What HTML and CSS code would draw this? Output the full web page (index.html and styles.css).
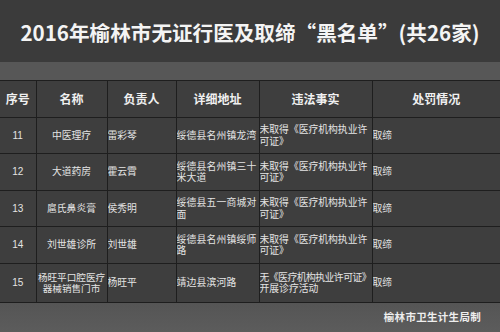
FILE: index.html
```html
<!DOCTYPE html>
<html lang="zh">
<head>
<meta charset="utf-8">
<link rel="stylesheet" href="styles.css">
</head>
<body>
<div class="page">
  <header class="title-bar">
    <h1 class="title">2016年榆林市无证行医及取缔“黑名单”(共26家)</h1>
  </header>
  <div class="band"></div>
  <table class="list">
    <colgroup>
      <col class="c1"><col class="c2"><col class="c3"><col class="c4"><col class="c5"><col class="c6">
    </colgroup>
    <thead>
      <tr class="h">
        <th>序号</th><th>名称</th><th>负责人</th><th>详细地址</th><th>违法事实</th><th>处罚情况</th>
      </tr>
    </thead>
    <tbody>
      <tr class="r1">
        <td class="num">11</td><td class="name">中医理疗</td><td>雷彩琴</td>
        <td class="addr">绥德县名州镇龙湾</td><td class="fact">未取得《医疗机构执业许<br>可证》</td><td>取缔</td>
      </tr>
      <tr class="r2">
        <td class="num">12</td><td class="name">大道药房</td><td>霍云霄</td>
        <td class="addr">绥德县名州镇三十<br>米大道</td><td class="fact">未取得《医疗机构执业许<br>可证》</td><td>取缔</td>
      </tr>
      <tr class="r3">
        <td class="num">13</td><td class="name">扈氏鼻炎膏</td><td>侯秀明</td>
        <td class="addr">绥德县五一商城对<br>面</td><td class="fact">未取得《医疗机构执业许<br>可证》</td><td>取缔</td>
      </tr>
      <tr class="r4">
        <td class="num">14</td><td class="name">刘世雄诊所</td><td>刘世雄</td>
        <td class="addr">绥德县名州镇绥师<br>路</td><td class="fact">未取得《医疗机构执业许<br>可证》</td><td>取缔</td>
      </tr>
      <tr class="r5">
        <td class="num">15</td><td class="name tight">杨旺平口腔医疗<br>器械销售门市</td><td>杨旺平</td>
        <td class="addr">靖边县滨河路</td><td class="fact"><span class="squeeze">无《医疗机构执业许可证》</span><br>开展诊疗活动</td><td>取缔</td>
      </tr>
    </tbody>
  </table>
  <footer class="foot">
    <span class="org">榆林市卫生计生局制</span>
  </footer>
</div>
</body>
</html>
```

FILE: styles.css
```css
* { box-sizing: border-box; }
html, body {
  margin: 0;
  padding: 0;
  background: #3d3d3d;
}
.page {
  width: 500px;
  height: 332px;
  display: flex;
  flex-direction: column;
  font-family: "Noto Sans CJK SC", "Noto Sans", sans-serif;
  color: #e4e4e4;
  overflow: hidden;
}
.title-bar {
  height: 62px;
  background: #3b3b3b;
  display: flex;
  align-items: center;
  justify-content: center;
}
.title {
  margin: 0;
  font-size: 20.6px;
  font-weight: 700;
  color: #f4f4f4;
  white-space: nowrap;
  padding-top: 1px;
}
.band {
  height: 18px;
  background: #575757;
}
.list {
  width: 500px;
  border-collapse: collapse;
  table-layout: fixed;
  background: #3e3e3e;
}
.c1 { width: 36px; }
.c2 { width: 71px; }
.c3 { width: 69px; }
.c4 { width: 83px; }
.c5 { width: 113px; }
.c6 { width: 128px; }
.list th, .list td {
  border: 1px solid #1e1e1e;
  padding: 0;
  vertical-align: middle;
  white-space: nowrap;
  overflow: hidden;
}
.list td {
  font-family: "Liberation Sans", "Noto Sans CJK SC", sans-serif;
  font-size: 9.8px;
  line-height: 11.5px;
  text-align: left;
}
.list tr > :first-child { border-left: none; }
.list tr > :last-child { border-right: none; }
.list th {
  font-size: 12px;
  line-height: 16px;
  font-weight: 700;
  color: #f0f0f0;
  text-align: center;
}
.list td.num {
  text-align: center;
  font-size: 10px;
}
.list td.name { text-align: center; }
.list td.name.tight { font-size: 9.6px; }
.list td.addr { letter-spacing: 0.2px; }
.squeeze { letter-spacing: -0.5px; }
.h { height: 37px; }
.r1 { height: 36px; }
.r2 { height: 37px; }
.r3 { height: 36px; }
.r4 { height: 37px; }
.r5 { height: 39px; }
.foot {
  flex: 1;
  background: linear-gradient(#555555, #5c5c5c);
  display: flex;
  align-items: center;
  justify-content: flex-end;
  padding-right: 19px;
  padding-bottom: 2px;
}
.org {
  font-size: 10.5px;
  font-weight: 700;
  color: #eeeeee;
  letter-spacing: 0.3px;
}
```
